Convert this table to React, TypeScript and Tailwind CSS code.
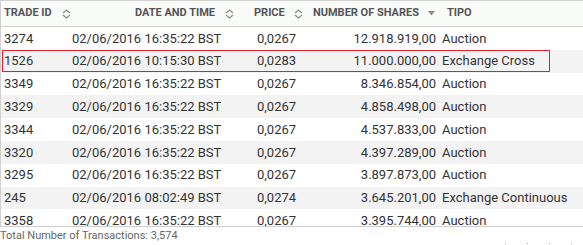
import React from "react";

const rows = [
  ["3274", "02/06/2016 16:35:22 BST", "0,0267", "12.918.919,00", "Auction"],
  ["1526", "02/06/2016 10:15:30 BST", "0,0283", "11.000.000,00", "Exchange Cross"],
  ["3349", "02/06/2016 16:35:22 BST", "0,0267", "8.346.854,00", "Auction"],
  ["3329", "02/06/2016 16:35:22 BST", "0,0267", "4.858.498,00", "Auction"],
  ["3344", "02/06/2016 16:35:22 BST", "0,0267", "4.537.833,00", "Auction"],
  ["3320", "02/06/2016 16:35:22 BST", "0,0267", "4.397.289,00", "Auction"],
  ["3295", "02/06/2016 16:35:22 BST", "0,0267", "3.897.873,00", "Auction"],
  ["245", "02/06/2016 08:02:49 BST", "0,0274", "3.645.201,00", "Exchange Continuous"],
  ["3358", "02/06/2016 16:35:22 BST", "0,0267", "3.395.744,00", "Auction"],
];

function SortIcon() {
  return (
    <svg width="9" height="10" viewBox="0 0 9 10" className="shrink-0">
      <path d="M1 4 L4.5 1 L8 4" fill="none" stroke="#8a8a8a" strokeWidth="1.1" />
      <path d="M1 6 L4.5 9 L8 6" fill="none" stroke="#8a8a8a" strokeWidth="1.1" />
    </svg>
  );
}

function DownTri() {
  return (
    <svg width="7" height="5" viewBox="0 0 7 5" className="shrink-0">
      <path d="M0 0 L7 0 L3.5 4.5 Z" fill="#8a8a8a" />
    </svg>
  );
}

const grid = "grid grid-cols-[67px_173px_67px_130px_1fr]";

export default function App() {
  return (
    <div
      className="w-[583px] h-[245px] bg-white overflow-hidden relative"
      style={{ fontFamily: "Roboto, 'Liberation Sans', sans-serif" }}
    >
      <div className="border-t border-l border-[#d0d0d0]">
        <div className={`${grid} h-[26px] bg-[#f8fbf8] border-b border-[#cfcfcf] items-center text-[11px] font-bold text-[#555] whitespace-nowrap`}>
          <div className="flex items-center pl-[3px] gap-[10px]">
            <span>TRADE ID</span>
            <SortIcon />
          </div>
          <div className="flex items-center justify-end pr-[7px] gap-[10px]">
            <span>DATE AND TIME</span>
            <SortIcon />
          </div>
          <div className="flex items-center pl-[13px] gap-[9px]">
            <span>PRICE</span>
            <SortIcon />
          </div>
          <div className="flex items-center justify-end pr-[3px] gap-[9px]">
            <span>NUMBER OF SHARES</span>
            <DownTri />
          </div>
          <div className="flex items-center pl-[9px]">
            <span>TIPO</span>
          </div>
        </div>
        <div className="h-[200px] overflow-hidden border-b border-[#cfcfcf]">
          {rows.map((r, i) => (
            <div
              key={i}
              className={`${grid} relative h-[22.8px] items-center text-[13px] text-[#333] ${i % 2 === 1 ? "bg-[#f3f3f3]" : "bg-white"}`}
            >
              <div className="pl-[3px]">{r[0]}</div>
              <div className="pl-[4px] whitespace-nowrap">{r[1]}</div>
              <div className="pl-[16px]">{r[2]}</div>
              <div className="text-right pr-[2px]">{r[3]}</div>
              <div className="pl-[4px] whitespace-nowrap">{r[4]}</div>
              {i === 1 && (
                <div className="absolute left-[1px] top-0 w-[548px] h-[22px] border border-[#e0202e]" />
              )}
            </div>
          ))}
        </div>
      </div>
      <div className="h-[17px] flex items-center text-[11px] text-[#666] pt-[2px] relative">
        Total Number of Transactions: 3,574
        <div className="absolute bottom-0 left-[505px] w-[1px] h-[1px] bg-[#aaa]" />
        <div className="absolute bottom-0 left-[527px] w-[1px] h-[1px] bg-[#aaa]" />
        <div className="absolute bottom-0 left-[549px] w-[1px] h-[1px] bg-[#aaa]" />
        <div className="absolute bottom-0 left-[571px] w-[1px] h-[1px] bg-[#aaa]" />
      </div>
    </div>
  );
}
